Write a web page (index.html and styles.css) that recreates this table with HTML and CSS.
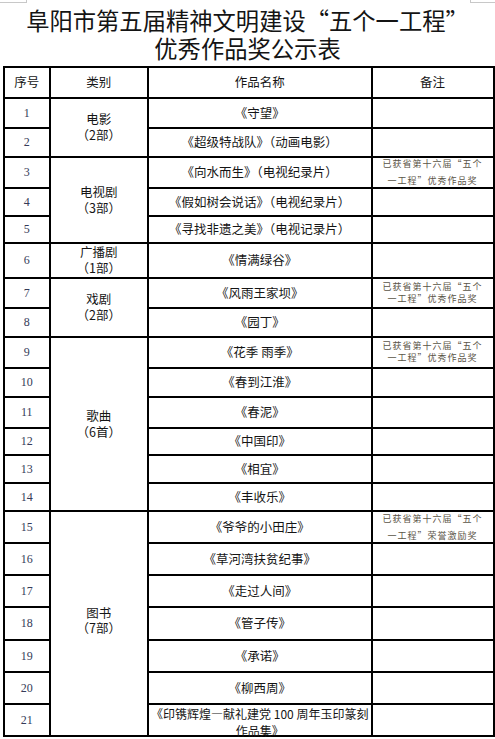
FILE: index.html
```html
<!DOCTYPE html>
<html lang="zh-CN">
<head>
<meta charset="utf-8">
<title>阜阳市第五届精神文明建设“五个一工程”优秀作品奖公示表</title>
<link rel="stylesheet" href="styles.css">
</head>
<body>
<div class="page">
  <span class="mark mark-left"></span>
  <span class="mark mark-right"></span>
  <h1 class="title"><span class="title-line">阜阳市第五届精神文明建设“五个一工程”</span><span class="title-line">优秀作品奖公示表</span></h1>
  <div class="grid">
    <div class="cell head num-h">序号</div>
    <div class="cell head cat-h">类别</div>
    <div class="cell head work-h">作品名称</div>
    <div class="cell head note-h">备注</div>

    <div class="cell num">1</div>
    <div class="cell cat span2">电影<br>（2部）</div>
    <div class="cell work">《守望》</div>
    <div class="cell note"></div>

    <div class="cell num">2</div>
    <div class="cell work">《超级特战队》（动画电影）</div>
    <div class="cell note"></div>

    <div class="cell num">3</div>
    <div class="cell cat span3">电视剧<br>（3部）</div>
    <div class="cell work">《向水而生》（电视纪录片）</div>
    <div class="cell note note-loose">已获省第十六届“五个<br>一工程”优秀作品奖</div>

    <div class="cell num">4</div>
    <div class="cell work">《假如树会说话》（电视纪录片）</div>
    <div class="cell note"></div>

    <div class="cell num">5</div>
    <div class="cell work">《寻找非遗之美》（电视记录片）</div>
    <div class="cell note"></div>

    <div class="cell num">6</div>
    <div class="cell cat">广播剧<br>（1部）</div>
    <div class="cell work">《情满绿谷》</div>
    <div class="cell note"></div>

    <div class="cell num">7</div>
    <div class="cell cat span2">戏剧<br>（2部）</div>
    <div class="cell work">《风雨王家坝》</div>
    <div class="cell note note-tight">已获省第十六届“五个<br>一工程”优秀作品奖</div>

    <div class="cell num">8</div>
    <div class="cell work">《园丁》</div>
    <div class="cell note"></div>

    <div class="cell num">9</div>
    <div class="cell cat span6">歌曲<br>（6首）</div>
    <div class="cell work">《花季 雨季》</div>
    <div class="cell note note-tight">已获省第十六届“五个<br>一工程”优秀作品奖</div>

    <div class="cell num">10</div>
    <div class="cell work">《春到江淮》</div>
    <div class="cell note"></div>

    <div class="cell num">11</div>
    <div class="cell work">《春泥》</div>
    <div class="cell note"></div>

    <div class="cell num">12</div>
    <div class="cell work">《中国印》</div>
    <div class="cell note"></div>

    <div class="cell num">13</div>
    <div class="cell work">《相宜》</div>
    <div class="cell note"></div>

    <div class="cell num">14</div>
    <div class="cell work">《丰收乐》</div>
    <div class="cell note"></div>

    <div class="cell num">15</div>
    <div class="cell cat span7 cat-book">图书<br>（7部）</div>
    <div class="cell work">《爷爷的小田庄》</div>
    <div class="cell note note-loose">已获省第十六届“五个<br>一工程”荣誉激励奖</div>

    <div class="cell num">16</div>
    <div class="cell work">《草河湾扶贫纪事》</div>
    <div class="cell note"></div>

    <div class="cell num">17</div>
    <div class="cell work">《走过人间》</div>
    <div class="cell note"></div>

    <div class="cell num">18</div>
    <div class="cell work">《管子传》</div>
    <div class="cell note"></div>

    <div class="cell num">19</div>
    <div class="cell work">《承诺》</div>
    <div class="cell note"></div>

    <div class="cell num">20</div>
    <div class="cell work">《柳西周》</div>
    <div class="cell note"></div>

    <div class="cell num">21</div>
    <div class="cell work work-long"><span class="long-line">《印镌辉煌—献礼建党 100 周年玉印篆刻</span><span class="long-line">作品集》</span></div>
    <div class="cell note"></div>
  </div>
</div>
</body>
</html>
```

FILE: styles.css
```css
* {
  box-sizing: border-box;
}

html, body {
  margin: 0;
  padding: 0;
  background: #ffffff;
}

body {
  font-family: "Noto Sans CJK SC", "Noto Sans", sans-serif;
  color: #111111;
}

.page {
  position: relative;
  width: 495px;
  height: 739px;
  overflow: hidden;
  padding-top: 6px;
}

.mark {
  position: absolute;
  top: 0;
  width: 27px;
  height: 3px;
  border-bottom: 1px solid #c8c8c8;
}

.mark-left {
  left: 0;
  border-right: 1px solid #c8c8c8;
}

.mark-right {
  left: 470px;
  width: 25px;
  border-left: 1px solid #c8c8c8;
}

.title {
  margin: 0;
  height: 60px;
  display: flex;
  flex-direction: column;
  align-items: center;
  font-size: 23.3px;
  line-height: 28px;
  font-weight: normal;
  color: #141414;
  font-feature-settings: "fwid" 1;
}

.title-line {
  display: block;
  height: 28px;
  white-space: nowrap;
}

.grid {
  display: grid;
  margin-left: 3px;
  width: 491.5px;
  background: #000000;
  padding: 1.5px;
  gap: 1.5px;
  grid-template-columns: 44.5px 96.5px 222.5px 120px;
  grid-template-rows: 29.5px 28.5px 27.5px 29.5px 26.5px 25.5px 33.5px 28.5px 27.5px 29.5px 27.5px 29.5px 25.5px 26.5px 26.5px 30.5px 30.5px 30.5px 31.5px 30.5px 30.5px 30.5px;
}

.cell {
  background: #ffffff;
  display: flex;
  align-items: center;
  justify-content: center;
  text-align: center;
  font-size: 12.5px;
  line-height: 16px;
  color: #151515;
}

.num-h, .num { grid-column: 1; }
.cat-h, .cat { grid-column: 2; }
.work-h, .work { grid-column: 3; }
.note-h, .note { grid-column: 4; }

.span2 { grid-row: span 2; }
.span3 { grid-row: span 3; }
.span6 { grid-row: span 6; }
.span7 { grid-row: span 7; }

.num {
  font-family: "Liberation Serif", "DejaVu Serif", serif;
  font-size: 12px;
  color: #353b58;
}

.cat-book {
  line-height: 15px;
  padding-bottom: 6px;
}

.work-long {
  flex-direction: column;
  font-size: 12px;
  padding-top: 4px;
}

.long-line {
  display: block;
  height: 17px;
  line-height: 17px;
  white-space: nowrap;
}

.note {
  font-size: 9px;
  letter-spacing: 1px;
  color: #5a5447;
  font-feature-settings: "fwid" 1;
}

.note-loose {
  line-height: 17px;
}

.note-tight {
  line-height: 12px;
}
```
